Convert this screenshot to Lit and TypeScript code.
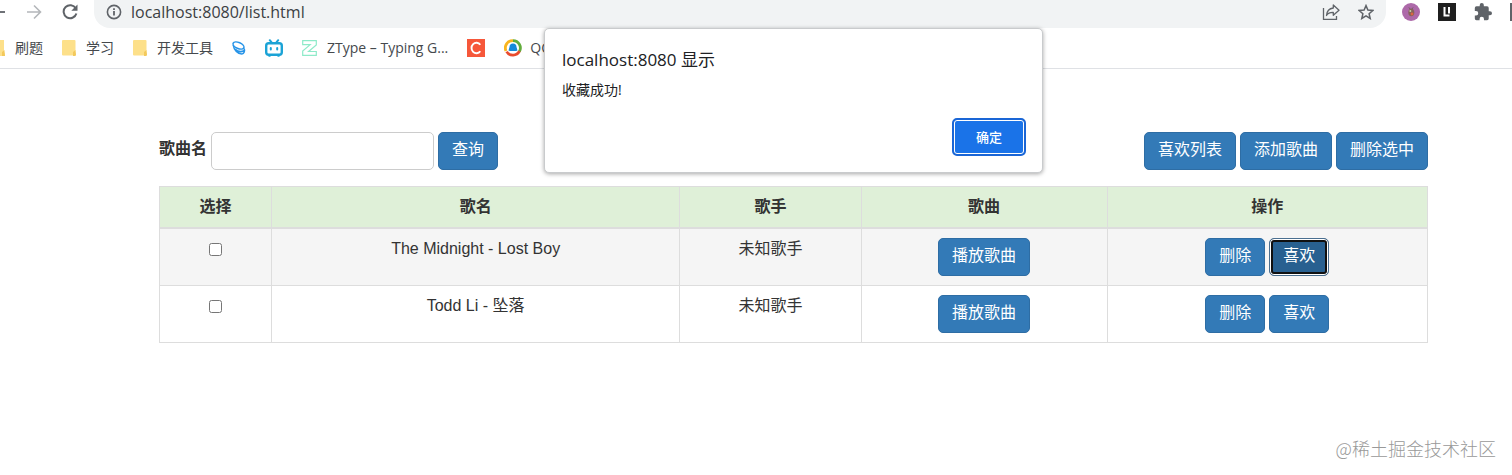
import { LitElement, html, css } from "lit";
import { customElement, state } from "lit/decorators.js";

interface Song {
  id: number;
  title: string;
  singer: string;
  liked: boolean;
}

const folder = html`<svg width="14" height="16" viewBox="0 0 14 16" aria-hidden="true">
  <path d="M1 0h11.500a1 1 0 0 1 1 1v10l.5 3.500a1 1 0 0 1-1 1H1a1 1 0 0 1-1-1V1a1 1 0 0 1 1-1z" fill="#fde08a" />
  <path d="M11 16v-4l2.500-2v2l.5 2.500a1.500 1.500 0 0 1-1.500 1.500z" fill="#f3c95c" />
</svg>`;

@customElement("browser-bar")
export class BrowserBar extends LitElement {
  static styles = css`
    :host {
      display: block;
      color: #45494d;
      font-family: "Open Sans", "Noto Sans CJK SC", sans-serif;
      border-bottom: 1px solid #dfe1e5;
    }
    svg {
      display: block;
      flex: none;
    }
    button {
      display: block;
      padding: 0;
      border: 0;
      background: none;
      color: #5f6368;
    }
    .toolbar {
      display: flex;
      height: 28px;
      overflow: hidden;
    }
    .nav,
    .tools {
      display: flex;
      align-items: center;
      box-sizing: border-box;
      padding-bottom: 4px;
    }
    .nav {
      gap: 20px;
      padding-right: 16px;
    }
    .tools {
      gap: 18px;
      padding-left: 16px;
    }
    .address {
      flex: 1;
      display: flex;
      align-items: center;
      box-sizing: border-box;
      gap: 9px;
      padding: 0 12px 4px;
      background: #f1f3f4;
      border-radius: 0 0 16px 16px;
    }
    .url {
      flex: 1;
      min-width: 0;
      padding: 0;
      border: 0;
      outline: 0;
      background: none;
      color: #3c4043;
      font: 16px/24px "Open Sans", "Noto Sans CJK SC", sans-serif;
    }
    .page-actions {
      display: flex;
      gap: 18px;
    }
    .bookmarks {
      display: flex;
      align-items: center;
      gap: 19px;
      height: 40px;
      overflow: hidden;
    }
    .bookmark {
      display: flex;
      align-items: center;
      gap: 10px;
      color: inherit;
      font-size: 14px;
      line-height: 20px;
      text-decoration: none;
      white-space: nowrap;
    }
    .wide {
      gap: 8px;
    }
  `;

  render() {
    return html`
      <div class="toolbar">
        <div class="nav">
          <button aria-label="后退">
            <svg width="6" height="16" viewBox="10 0 6 16" fill="none" stroke="currentColor" stroke-width="1.800"><path d="M1 8h14" /></svg>
          </button>
          <button aria-label="前进">
            <svg width="16" height="16" viewBox="0 0 16 16" fill="none" stroke="#b4b7ba" stroke-width="1.600"><path d="M1 8h13M8 1.500 14.500 8 8 14.500" /></svg>
          </button>
          <button aria-label="重新加载">
            <svg width="16" height="16" viewBox="0 0 16 16" fill="none" stroke="currentColor" stroke-width="2"><path d="M13.800 4.500A6.500 6.500 0 1 0 14.400 9.500" /><path d="M15.500 .5v6.200H9.300z" fill="currentColor" stroke="none" /></svg>
          </button>
        </div>
        <div class="address">
          <svg width="16" height="16" viewBox="0 0 16 16" fill="none" stroke="#5f6368" stroke-width="1.600"><circle cx="8" cy="8" r="6.600" /><path d="M8 7v4.500M8 4.200v1.700" stroke-width="1.800" /></svg>
          <input class="url" aria-label="地址" value="localhost:8080/list.html" />
          <div class="page-actions">
            <button aria-label="分享">
              <svg width="18" height="18" viewBox="0 0 18 18" fill="none" stroke="currentColor" stroke-width="1.300"><path d="M1.500 5v11.300h13V13" /><path d="M11.300 2 17 7.200l-5.700 5V9.400C8 9.300 5.700 10.500 4.500 12.500 4.800 8.500 7.200 5.500 11.300 5z" stroke-linejoin="round" /></svg>
            </button>
            <button aria-label="收藏">
              <svg width="16" height="16" viewBox="0 0 16 16" fill="none" stroke="currentColor" stroke-width="1.500"><path d="m8 1.600 1.900 4.500 4.900.4-3.700 3.200 1.100 4.800L8 11.900l-4.200 2.600 1.100-4.800L1.200 6.500l4.900-.4z" /></svg>
            </button>
          </div>
        </div>
        <div class="tools">
          <svg width="18" height="18" viewBox="0 0 18 18"><circle cx="9" cy="9" r="9" fill="#ad69a9" /><path d="M7 4.500 9 7l2-2.500" stroke="#6c5c58" fill="none" /><ellipse cx="9.300" cy="9.500" rx="3" ry="3.800" fill="#86635b" /><circle cx="8.300" cy="8" r="1" fill="#c7d1a3" /><circle cx="10" cy="11" r="1.400" fill="#dc6542" /></svg>
          <svg width="18" height="18" viewBox="0 0 18 18"><path d="M0 0h18v18H0z" fill="#1f1f1f" /><path d="M6.500 4v8.500h5M11 4v6.500" stroke="#fff" stroke-width="2" fill="none" /></svg>
          <button aria-label="扩展程序">
            <svg width="18" height="18" viewBox="1 1 22 22" fill="currentColor"><path d="M20.500 11H19V7a2 2 0 0 0-2-2h-4V3.500a2.500 2.500 0 0 0-5 0V5H4a2 2 0 0 0-2 2v3.800h1.500a2.700 2.700 0 0 1 0 5.400H2V20a2 2 0 0 0 2 2h3.800v-1.500a2.700 2.700 0 0 1 5.400 0V22H17a2 2 0 0 0 2-2v-4h1.500a2.500 2.500 0 0 0 0-5z" /></svg>
          </button>
          <svg width="2" height="18" viewBox="0 0 2 18"><path d="M0 0h2v18H0z" fill="#5f6368" /></svg>
        </div>
      </div>
      <nav class="bookmarks" aria-label="书签">
        <a class="bookmark" href="#">
          <svg width="5" height="16" viewBox="9 0 5 16"><path d="M0 0h13v11l1 3.500a1 1 0 0 1-1 1.500H0z" fill="#fde08a" /><path d="M11 16v-4l2.500-2v2l.5 4z" fill="#f3c95c" /></svg>刷题
        </a>
        <a class="bookmark" href="#">${folder}学习</a>
        <a class="bookmark" href="#">${folder}开发工具</a>
        <a class="bookmark" href="#" aria-label="书签一">
          <svg width="14" height="16" viewBox="0 0 14 16" fill="none" stroke="#2794e8" stroke-width="1.500"><ellipse cx="6.500" cy="5.500" rx="5.800" ry="3" transform="rotate(24 6.500 5.500)" /><path d="M1.200 5c.6 5 4.800 9 8.600 9 2.500-.3 3.200-3.500 2.400-5.500M3 9c2.500 2.500 6 3.400 9.400 1.500" /></svg>
        </a>
        <a class="bookmark" href="#" aria-label="哔哩哔哩">
          <svg width="18" height="18" viewBox="0 0 18 18" fill="none" stroke="#1ba3d6" stroke-width="2.400" stroke-linecap="round"><rect x="1.200" y="4.200" width="15.600" height="11.600" rx="2.500" /><path d="m4.800 1.200 2 2.500M13.200 1.200l-2 2.500M5.800 8.900v1.600M12.200 8.900v1.600" stroke-width="2" /><path d="M4 17h1M13 17h1" stroke-width="1.500" /></svg>
        </a>
        <a class="bookmark" href="#">
          <svg width="15" height="16" viewBox="0 0 15 16" fill="none" stroke="#8eeac9" stroke-width="1.200"><path d="M.7.700h13.600v4.200L6.600 11.500h7.700v3.800H.7v-4.200L8.200 4.600H.7z" /></svg>ZType – Typing G...
        </a>
        <a class="bookmark" href="#" aria-label="C">
          <svg width="18" height="18" viewBox="0 0 18 18"><path d="M0 0h18v18H0z" fill="#f6573a" /><path d="M13.300 5.800A4.900 5.200 0 1 0 13.300 12.200" fill="none" stroke="#fff" stroke-width="1.900" /></svg>
        </a>
        <a class="bookmark wide" href="#">
          <svg width="18" height="18" viewBox="0 0 18 18" fill="none" stroke-width="2.800"><path d="M2 12A7.400 7.400 0 0 1 9 1.600" stroke="#f9b51d" /><path d="M9 1.600a7.400 7.400 0 0 1 6.400 11" stroke="#62ad3c" /><path d="M15.500 12.200A7.400 7.400 0 0 1 2.600 12.600" stroke="#e94b2d" /><path d="M9 4.500a3.500 3.500 0 0 1 3.500 3.500l1 3.500-1.500.5H6l-1.500-.5 1-3.500A3.500 3.500 0 0 1 9 4.500z" fill="#1688d8" /></svg>QQ
        </a>
      </nav>
    `;
  }
}

@customElement("alert-dialog")
export class AlertDialog extends LitElement {
  static styles = css`
    :host {
      display: block;
      box-sizing: border-box;
      padding: 19px 16px 16px 17px;
      background: #fff;
      border: 1px solid #c9cbcd;
      border-radius: 5px;
      box-shadow: 0 1px 4px rgba(0, 0, 0, 0.35);
      color: #202124;
      font-family: "Open Sans", "Noto Sans CJK SC", sans-serif;
    }
    .title {
      margin: 0;
      font-size: 17px;
      font-weight: 400;
      line-height: 24px;
    }
    .message {
      margin: 8px 0 18px;
      font-size: 14px;
      line-height: 20px;
    }
    .actions {
      display: flex;
      justify-content: flex-end;
    }
    .ok {
      width: 74px;
      height: 38px;
      padding: 0;
      color: #fff;
      background: #1a73e8;
      border: 2px solid #1a66d6;
      border-radius: 5px;
      box-shadow: inset 0 0 0 1px #fff;
      font: 500 13px/20px "Noto Sans CJK SC", sans-serif;
    }
  `;

  render() {
    return html`
      <h2 class="title">localhost:8080 显示</h2>
      <p class="message">收藏成功!</p>
      <div class="actions"><button class="ok" @click=${() => this.dispatchEvent(new Event("close"))}>确定</button></div>
    `;
  }
}

@customElement("app-root")
export class AppRoot extends LitElement {
  static styles = css`
    :host {
      display: block;
      position: relative;
      min-height: 100vh;
      overflow: hidden;
      background: #fff;
      color: #333;
      font: 16px/22px "Liberation Sans", "Noto Sans CJK SC", sans-serif;
    }
    .page {
      padding: 63px 84px 0 159px;
    }
    .controls {
      display: flex;
      justify-content: space-between;
      margin-bottom: 16px;
    }
    .group {
      display: flex;
      align-items: center;
      gap: 4px;
    }
    .label {
      padding-bottom: 4px;
      font-weight: 700;
    }
    .query {
      box-sizing: border-box;
      width: 223px;
      height: 38px;
      padding: 6px 14px;
      border: 1px solid #ccc;
      border-radius: 5px;
      background: #fff;
      color: inherit;
      font: inherit;
    }
    .btn {
      box-sizing: border-box;
      height: 38px;
      padding: 0 13px 3px;
      border: 1px solid #2e6da4;
      border-radius: 5px;
      background: #337ab7;
      color: #fff;
      font: inherit;
    }
    .btn.active {
      background: #286090;
      border-color: #4a6f90;
      box-shadow: inset 0 0 0 1px #fff, inset 0 0 0 3px #101010;
    }
    .songs {
      width: 100%;
      table-layout: fixed;
      border-collapse: collapse;
      border: 1px solid #ddd;
      text-align: center;
    }
    .songs th,
    .songs td {
      box-sizing: border-box;
      padding: 9px;
      border: 1px solid #ddd;
      vertical-align: top;
    }
    .songs th {
      border-bottom-width: 2px;
      background: #dff0d8;
    }
    .songs tbody tr:nth-child(odd) {
      background: #f5f5f5;
    }
    .c-pick {
      width: 112px;
    }
    .c-title {
      width: 32.200%;
    }
    .c-singer {
      width: 14.300%;
    }
    .c-play {
      width: 19.400%;
    }
    .pick {
      display: block;
      width: 13px;
      height: 13px;
      margin: 5px auto 0;
    }
    .row-actions {
      display: flex;
      justify-content: center;
      gap: 4px;
    }
    .dialog {
      position: absolute;
      top: 28px;
      left: 544px;
      width: 499px;
    }
    .watermark {
      position: absolute;
      right: 16px;
      bottom: 14px;
      color: #999;
      font: 300 18px/26px "Noto Sans CJK SC", sans-serif;
    }
  `;

  @state() private open = true;

  @state() private songs: Song[] = [
    { id: 1, title: "The Midnight - Lost Boy", singer: "未知歌手", liked: true },
    { id: 2, title: "Todd Li - 坠落", singer: "未知歌手", liked: false },
  ];

  render() {
    return html`
      <browser-bar></browser-bar>
      <main class="page">
        <div class="controls">
          <form class="group" @submit=${(e: Event) => e.preventDefault()}>
            <label class="label" for="name">歌曲名</label>
            <input class="query" id="name" type="text" />
            <button class="btn" type="submit">查询</button>
          </form>
          <div class="group">
            <button class="btn">喜欢列表</button>
            <button class="btn">添加歌曲</button>
            <button class="btn">删除选中</button>
          </div>
        </div>
        <table class="songs">
          <thead>
            <tr>
              <th class="c-pick">选择</th>
              <th class="c-title">歌名</th>
              <th class="c-singer">歌手</th>
              <th class="c-play">歌曲</th>
              <th>操作</th>
            </tr>
          </thead>
          <tbody>
            ${this.songs.map(
              (song) => html`<tr>
                <td><input class="pick" type="checkbox" aria-label=${song.title} /></td>
                <td>${song.title}</td>
                <td>${song.singer}</td>
                <td><div class="row-actions"><button class="btn">播放歌曲</button></div></td>
                <td>
                  <div class="row-actions">
                    <button class="btn">删除</button>
                    <button class="btn ${song.liked ? "active" : ""}">喜欢</button>
                  </div>
                </td>
              </tr>`
            )}
          </tbody>
        </table>
      </main>
      ${this.open
        ? html`<alert-dialog class="dialog" role="alertdialog" @close=${() => (this.open = false)}></alert-dialog>`
        : null}
      <div class="watermark">@稀土掘金技术社区</div>
    `;
  }
}
